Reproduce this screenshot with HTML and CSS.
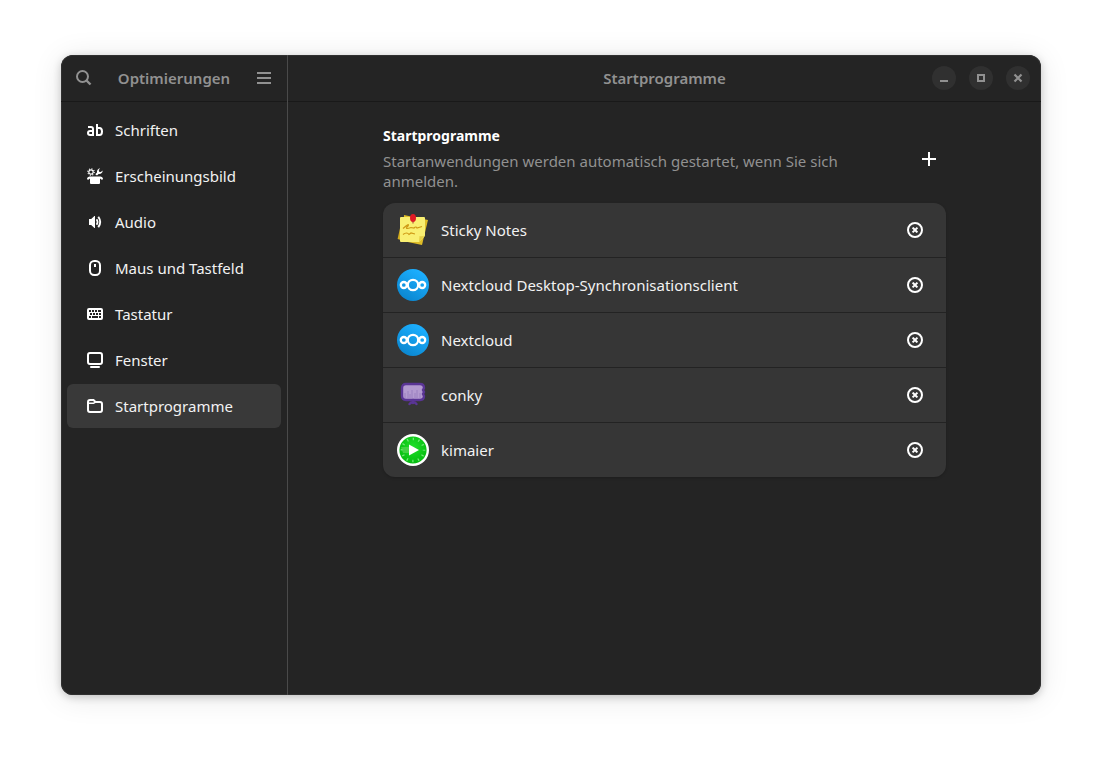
FILE: index.html
```html
<!DOCTYPE html>
<html lang="de">
<head>
<meta charset="utf-8">
<meta name="viewport" content="width=device-width, initial-scale=1">
<title>Optimierungen</title>
<link rel="stylesheet" href="styles.css">
</head>
<body>
<svg class="defs" aria-hidden="true">
  <defs>
    <linearGradient id="cloud-blue" x1="0" y1="1" x2="0.6" y2="0"><stop offset="0" stop-color="#0880c8"/><stop offset="1" stop-color="#1cafff"/></linearGradient>
    <radialGradient id="clock-green" cx="0.5" cy="0.4" r="0.6"><stop offset="0" stop-color="#20e02c"/><stop offset="1" stop-color="#02b80c"/></radialGradient>
    <symbol id="remove" viewBox="0 0 16 16">
      <circle cx="8" cy="8" r="7" fill="none" stroke="currentColor" stroke-width="2"/>
      <path d="M6.300 6.300l3.400 3.400M9.700 6.300l-3.400 3.400" stroke="currentColor" stroke-width="2" stroke-linecap="square"/>
    </symbol>
    <symbol id="nextcloud" viewBox="0 0 32 32">
      <circle cx="16" cy="16" r="16" fill="url(#cloud-blue)"/>
      <g fill="none" stroke="#fff" stroke-width="2.300"><circle cx="16" cy="16" r="5.200"/><circle cx="6.800" cy="16" r="3"/><circle cx="25.200" cy="16" r="3"/></g>
    </symbol>
  </defs>
</svg>
<div class="window">
  <aside class="sidebar">
    <header class="bar bar-side">
      <button class="flat" type="button" aria-label="Suchen"><svg class="icon" viewBox="0 0 16 16"><circle cx="6.500" cy="6.500" r="5.500" fill="none" stroke="currentColor" stroke-width="2"/><path d="M10.500 10.500l4 4" stroke="currentColor" stroke-width="2.400"/></svg></button>
      <h1 class="title">Optimierungen</h1>
      <button class="flat" type="button" aria-label="Menü"><svg class="icon" viewBox="0 0 16 16"><path d="M1 3h14M1 8h14M1 13h14" stroke="currentColor" stroke-width="2"/></svg></button>
    </header>
    <nav class="nav">
      <a class="nav-item" href="#schriften"><svg class="icon" viewBox="0 0 16 16" fill="none" stroke="currentColor" stroke-width="2"><path d="M1 5h3q2 0 2 2v7M6 9H3.200Q1 9 1 11T3.200 13H6M10 2v12M10 6h2.500Q15 6 15 9.500T12.500 13H10"/></svg>Schriften</a>
      <a class="nav-item" href="#erscheinungsbild"><svg class="icon" viewBox="0 0 16 16"><circle cx="4" cy="4" r="2.200" fill="none" stroke="currentColor" stroke-width="1.200"/><circle cx="4" cy="4" r="3.200" fill="none" stroke="currentColor" stroke-width="1.200" stroke-dasharray="1.100 1.413"/><path d="M8.300 6.200l1.700-1.800C9.600 2.400 11 .5 13.200.2L11.800 2l.3 1.800 1.700.3L15.700 2.600C15.600 5 13.800 6.400 11.600 6L10 7.600zM2.600 8.500h2.800q.6 1.500 2.600 1.500t2.600-1.500h2.800q1.800 0 2.400 1.600l.2.900q-.6 1-1.300.7L13 10.500V15q0 1-1 1H4q-1 0-1-1v-4.500l-1.700 1.200Q.6 12 0 11l.2-.9q.6-1.600 2.400-1.600zM5 8.500h6v3H5z" fill="currentColor"/></svg>Erscheinungsbild</a>
      <a class="nav-item" href="#audio"><svg class="icon" viewBox="0 0 16 16"><path d="M2 5h2.200L7.400 2H8v12h-.6L4.200 11H2z" fill="currentColor"/><path d="M9.600 5.200q2 2.800 0 5.600" fill="none" stroke="currentColor" stroke-width="1.700"/><path d="M11.300 2.700q3.800 5.300 0 10.600" fill="none" stroke="currentColor" stroke-width="1.900"/></svg>Audio</a>
      <a class="nav-item" href="#maus"><svg class="icon" viewBox="0 0 16 16"><rect x="3" y="1" width="10" height="14" rx="4.200" fill="none" stroke="currentColor" stroke-width="2"/><path d="M8 4v3" stroke="currentColor" stroke-width="2"/></svg>Maus und Tastfeld</a>
      <a class="nav-item" href="#tastatur"><svg class="icon" viewBox="0 0 16 16"><path fill="currentColor" fill-rule="evenodd" d="M2 2h12q2 0 2 2v8q0 2-2 2H2q-2 0-2-2V4q0-2 2-2zM2 4v2h2V4zM5 4v2h2V4zM8 4v2h2V4zM11 4v2h3V4zM3 7v2h2V7zM6 7v2h2V7zM9 7v2h2V7zM12 7v2h2V7zM2 10v2h2v-2zM5 10v2h6v-2zM12 10v2h2v-2z"/></svg>Tastatur</a>
      <a class="nav-item" href="#fenster"><svg class="icon" viewBox="0 0 16 16"><rect x="1" y="1" width="14" height="11" rx="2" fill="none" stroke="currentColor" stroke-width="2"/><path d="M4 15h8" stroke="currentColor" stroke-width="2" stroke-linecap="round"/></svg>Fenster</a>
      <a class="nav-item selected" href="#startprogramme" aria-current="page"><svg class="icon" viewBox="0 0 16 16" fill="none" stroke="currentColor"><path d="M1 4q0-2 2-2h3.500l2 2H13q2 0 2 2v6q0 2-2 2H3q-2 0-2-2z" stroke-width="2"/><path d="M2 5.300h4.500l2-1.300" stroke-width="1.500"/></svg>Startprogramme</a>
    </nav>
  </aside>
  <main class="main">
    <header class="bar bar-main">
      <h2 class="title">Startprogramme</h2>
      <div class="controls">
        <button class="control" type="button" aria-label="Minimieren"><svg class="icon" viewBox="0 0 16 16"><path d="M4 11h8" stroke="currentColor" stroke-width="2"/></svg></button>
        <button class="control" type="button" aria-label="Maximieren"><svg class="icon" viewBox="0 0 16 16"><path d="M5 5h6v6H5z" fill="none" stroke="currentColor" stroke-width="2"/></svg></button>
        <button class="control" type="button" aria-label="Schließen"><svg class="icon" viewBox="0 0 16 16"><path d="M4.500 4.500l7 7M11.500 4.500l-7 7" stroke="currentColor" stroke-width="2.200"/></svg></button>
      </div>
    </header>
    <div class="page">
      <section class="group">
        <div class="group-head">
          <div>
            <h3 class="group-title">Startprogramme</h3>
            <p class="group-text">Startanwendungen werden automatisch gestartet, wenn Sie sich anmelden.</p>
          </div>
          <button class="flat bright" type="button" aria-label="Hinzufügen"><svg class="icon" viewBox="0 0 16 16"><path d="M8 1v14M1 8h14" stroke="currentColor" stroke-width="2"/></svg></button>
        </div>
        <ul class="card">
          <li class="row"><svg class="app" viewBox="0 0 32 32"><path d="M7 1l24 5-6 25-19-4z" fill="#dfbd28"/><path d="M3 14L.6 25 10 28z" fill="#d3ae20"/><path d="M4 3h23q1 0 1 1v18l-6 6H4q-1 0-1-1V4q0-1 1-1z" fill="#f9ef72"/><path d="M28 21l-6 7 .5-6q3 1 5.500-1z" fill="#e5cf45"/><path d="M6 14.500q7-6 5-2.500-4 4 3 1.500l3 .5q2-2 3 0l5-1.500M6 20.500q4-3 6 0l2-1.500 4 1" fill="none" stroke="#cf9a16" stroke-width="1.200"/><ellipse cx="16" cy="4" rx="3" ry="4" fill="#e01b24"/><path d="M16 7.500v2" stroke="#a33" stroke-width="1"/></svg><span class="name">Sticky Notes</span><button class="flat bright" type="button" aria-label="Sticky Notes entfernen"><svg class="icon"><use href="#remove"/></svg></button></li>
          <li class="row"><svg class="app"><use href="#nextcloud"/></svg><span class="name">Nextcloud Desktop-Synchronisationsclient</span><button class="flat bright" type="button" aria-label="Nextcloud Desktop-Synchronisationsclient entfernen"><svg class="icon"><use href="#remove"/></svg></button></li>
          <li class="row"><svg class="app"><use href="#nextcloud"/></svg><span class="name">Nextcloud</span><button class="flat bright" type="button" aria-label="Nextcloud entfernen"><svg class="icon"><use href="#remove"/></svg></button></li>
          <li class="row"><svg class="app" viewBox="0 0 32 32"><path d="M9 5h14q4 0 4 4l-1 2 1 2-1 2 1 2q0 4-4 4H9q-4 0-4-4V9q0-4 4-4z" fill="#b39ad0" stroke="#5a3595" stroke-width="2.400"/><path d="M8 19v-5M11 19v-7M13 19v-4M15 19v-8M18 19v-5M20 19v-8M23 19v-5" stroke="#9a80c0" stroke-width="1"/><path d="M12.500 25q3.500-4 7 0M16 21v3" fill="none" stroke="#5a3595" stroke-width="2.400" stroke-linecap="round"/></svg><span class="name">conky</span><button class="flat bright" type="button" aria-label="conky entfernen"><svg class="icon"><use href="#remove"/></svg></button></li>
          <li class="row"><svg class="app" viewBox="0 0 32 32"><circle cx="16" cy="16" r="14.800" fill="url(#clock-green)" stroke="#fff" stroke-width="2.400"/><circle cx="16" cy="16" r="11" fill="none" stroke="#73e878" stroke-width="2.600" stroke-dasharray="1.300 4.460" stroke-dashoffset=".65"/><path d="M4 13h8v6H6z" fill="#59d455" opacity=".7"/><path d="M12 10.500v11l10-5.500z" fill="#fff"/></svg><span class="name">kimaier</span><button class="flat bright" type="button" aria-label="kimaier entfernen"><svg class="icon"><use href="#remove"/></svg></button></li>
        </ul>
      </section>
    </div>
  </main>
</div>
</body>
</html>
```
FILE: styles.css
```css
* { box-sizing: border-box; }
body {
  margin: 0;
  min-height: 100vh;
  padding: 55px 61px 67px;
  display: flex;
  background: #fff;
  color: #f2f2f2;
  font: 15px/20px "Noto Sans", sans-serif;
}
h1, h2, h3, p, ul { margin: 0; padding: 0; }
.defs { position: absolute; width: 0; height: 0; }
.window {
  flex: 1;
  display: flex;
  overflow: hidden;
  background: #242424;
  border-radius: 12px;
  box-shadow: inset 0 0 0 1px #303030, 0 2px 8px rgba(0, 0, 0, .2), 0 3px 30px rgba(0, 0, 0, .1);
}
.sidebar {
  flex: 0 0 227px;
  border-right: 1px solid #4a4a4a;
}
.main { flex: 1; min-width: 0; }
.bar {
  display: flex;
  align-items: center;
  height: 47px;
  border-bottom: 1px solid #191919;
  color: #919191;
}
.bar-side { justify-content: space-between; padding: 0 6px; }
.bar-main {
  display: grid;
  grid-template-columns: 1fr auto 1fr;
  padding: 0 11px;
}
.bar-main .title { grid-column: 2; }
.title { font-size: 15px; font-weight: 600; }
.controls { display: flex; justify-content: flex-end; gap: 13px; }
button {
  display: grid;
  place-items: center;
  padding: 0;
  border: 0;
  background: none;
  color: inherit;
  font: inherit;
}
.flat { flex: none; width: 34px; height: 34px; border-radius: 6px; }
.bright { color: #fff; }
.control { width: 24px; height: 24px; border-radius: 50%; background: #303030; }
.icon { display: block; flex: none; width: 16px; height: 16px; }
.nav { display: grid; gap: 2px; padding: 6px; }
.nav-item {
  display: flex;
  align-items: center;
  gap: 12px;
  height: 44px;
  padding: 0 20px;
  border-radius: 6px;
  color: #f2f2f2;
  text-decoration: none;
}
.nav-item .icon { color: #fff; }
.selected { background: #393939; }
.page { padding: 24px 95px; }
.group { max-width: 600px; margin: 0 auto; }
.group-head {
  display: flex;
  align-items: center;
  justify-content: space-between;
  gap: 40px;
  margin-bottom: 12px;
}
.group-title { font-size: 14px; font-weight: 700; margin-bottom: 5px; color: #fff; }
.group-text { color: #919191; }
.card {
  list-style: none;
  border-radius: 12px;
  background: #363636;
  box-shadow: 0 1px 3px rgba(0, 0, 0, .2);
}
.row {
  display: flex;
  align-items: center;
  gap: 12px;
  min-height: 54px;
  padding: 10px 14px;
}
.row + .row { border-top: 1px solid #232323; }
.app { flex: none; width: 32px; height: 32px; }
.name { flex: 1; }
```
